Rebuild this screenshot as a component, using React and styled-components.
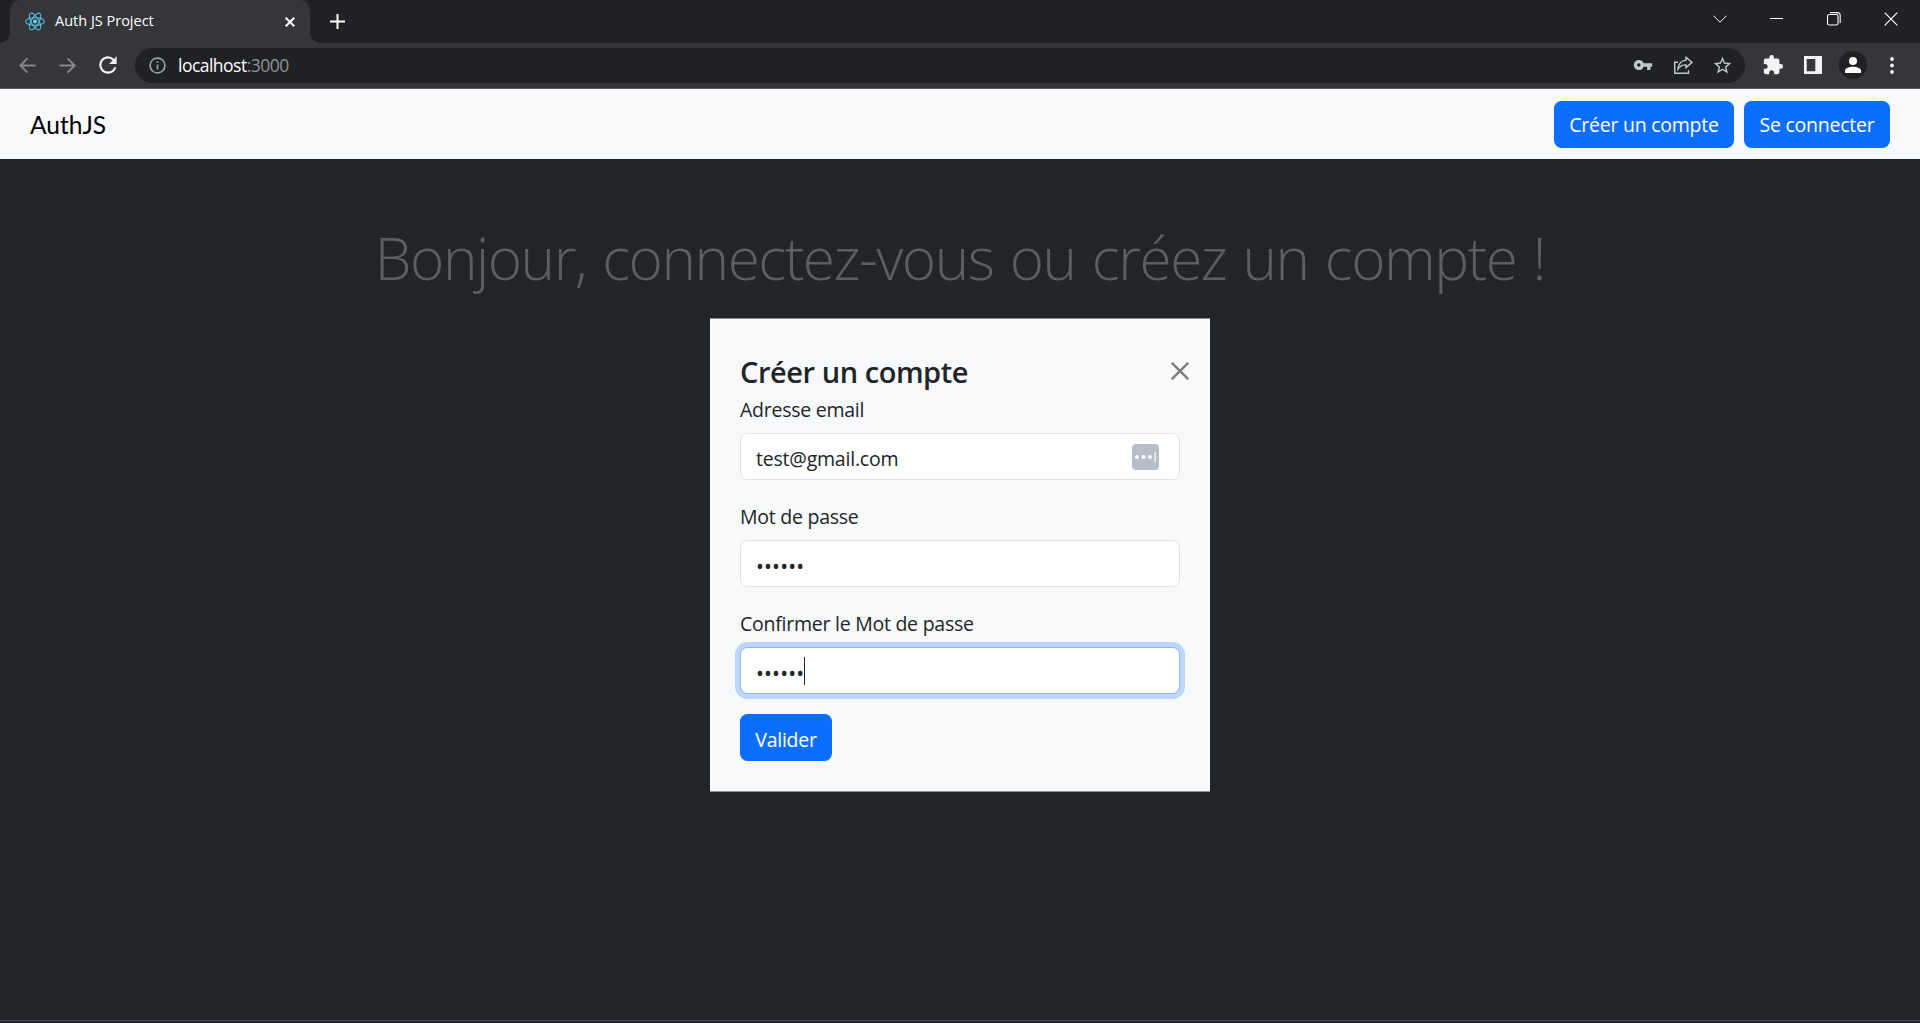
import React from "react";
import styled, { createGlobalStyle, css } from "styled-components";
import { MdVpnKey, MdExtension, MdRefresh, MdStarBorder } from "react-icons/md";

const GlobalStyle = createGlobalStyle`
  *, *::before, *::after { box-sizing: border-box; }
  html, body { margin: 0; padding: 0; background: #212529; }
  body { font-family: "Open Sans", "Noto Sans", sans-serif; overflow: hidden; }
  h1, h2, p { margin: 0; }
`;

const Window = styled.div`
  display: flex;
  flex-direction: column;
  width: 1920px;
  height: 1023px;
  overflow: hidden;
  background: #212529;
`;

const TabStrip = styled.div`
  display: flex;
  flex: none;
  height: 43px;
  padding-left: 10px;
  background: #202124;
`;

const Tab = styled.div`
  position: relative;
  display: flex;
  align-items: center;
  width: 300px;
  height: 43px;
  padding: 0 15px;
  border-radius: 10px 10px 0 0;
  background: #35363a;
  color: #fff;

  &::before, &::after {
    content: "";
    position: absolute;
    bottom: 0;
    width: 10px;
    height: 10px;
  }
  &::before {
    left: -10px;
    background: radial-gradient(circle at 0 0, transparent 9.5px, #35363a 10px);
  }
  &::after {
    right: -10px;
    background: radial-gradient(circle at 100% 0, transparent 9.5px, #35363a 10px);
  }
`;

const Icon = styled.svg`
  display: block;
  flex: none;
`;

const TabTitle = styled.span`
  flex: 1;
  margin-left: 10px;
  padding-bottom: 1px;
  font-size: 14.5px;
  line-height: 20px;
  white-space: nowrap;
`;

const NewTab = styled.div`
  display: flex;
  align-items: center;
  margin-left: 20px;
`;

const WindowControls = styled.div`
  display: flex;
  align-items: center;
  gap: 43.5px;
  height: 37px;
  margin-left: auto;
  padding-right: 22px;
`;

const Toolbar = styled.div`
  display: flex;
  align-items: center;
  flex: none;
  height: 46px;
  padding: 0 19px;
  padding-bottom: 1px;
  border-bottom: 1px solid #5b5c60;
  background: #35363a;
  color: #f1f3f4;
`;

const NavButtons = styled.div`
  display: flex;
  align-items: center;
  gap: 23px;
  width: 116px;

  svg:last-child { margin-left: -4px; }
`;

const AddressBar = styled.div`
  display: flex;
  align-items: center;
  width: 1610px;
  height: 35px;
  padding: 0 12px 0 14px;
  border-radius: 18px;
  background: #202124;
  color: #c4c7ca;
`;

const Url = styled.span`
  margin-left: 12px;
  color: #fff;
  font-size: 17.5px;
  line-height: 24px;
  letter-spacing: -0.52px;
`;

const Port = styled.span`
  color: #8f9397;
`;

const AddressActions = styled.div`
  display: flex;
  align-items: center;
  gap: 19.5px;
  margin-left: auto;
`;

const Extensions = styled.div`
  display: flex;
  align-items: center;
  margin-left: 17px;
`;

const SidePanelIcon = styled(Icon)`
  margin-left: 20px;
`;

const Avatar = styled.div`
  display: flex;
  align-items: center;
  justify-content: center;
  width: 28px;
  height: 28px;
  margin: 0 23px 0 17px;
  border-radius: 50%;
  background: #202124;
`;

const Navbar = styled.nav`
  display: flex;
  align-items: center;
  flex: none;
  height: 70px;
  padding: 0 30px;
  background: #f8f9fa;
`;

const Brand = styled.span`
  margin-right: auto;
  padding-top: 2px;
  color: #000;
  font-family: Lato, "Open Sans", sans-serif;
  font-size: 24.5px;
  line-height: 36px;
  white-space: nowrap;
`;

const NavActions = styled.div`
  display: flex;
  gap: 10px;
`;

const bodyText = css`
  font-size: 19.5px;
  line-height: 30px;
  letter-spacing: -0.25px;
  white-space: nowrap;
`;

const Button = styled.button`
  ${bodyText}
  display: flex;
  align-items: center;
  justify-content: center;
  width: ${(p) => p.$width}px;
  height: 47px;
  padding: ${(p) => p.$drop || 0}px 0 0;
  border: 0;
  border-radius: 7.5px;
  background: #0d6efd;
  color: #fff;
  font-family: inherit;
`;

const Main = styled.main`
  display: flex;
  flex: 1;
  flex-direction: column;
  align-items: center;
  padding-top: 60px;
`;

const Heading = styled.h1`
  height: 99.4px;
  color: #5c5f62;
  font-size: 58.5px;
  font-weight: 300;
  line-height: 76px;
  letter-spacing: -1.45px;
  word-spacing: 2.4px;
  white-space: nowrap;
`;

const Modal = styled.section`
  width: 500px;
  height: 474px;
  padding: 35px 30px 30px;
  background: #f8f9fa;
  box-shadow: inset 0 1px #8c8f92, inset 0 -1px #8c8f92;
  color: #212529;
`;

const ModalHeader = styled.header`
  display: flex;
  align-items: flex-start;
  justify-content: space-between;
  height: 40px;
  margin-right: -9px;
`;

const Title = styled.h2`
  padding-top: 1px;
  font-size: 29px;
  font-weight: 600;
  line-height: 36px;
  letter-spacing: -0.45px;
  white-space: nowrap;
`;

const CloseButton = styled.div`
  padding-top: 9px;
`;

const Field = styled.div`
  margin-bottom: 20px;
`;

const Label = styled.label`
  ${bodyText}
  display: block;
  width: max-content;
  padding-top: 2px;
  margin-bottom: 8px;
`;

const InputBox = styled.div`
  ${bodyText}
  display: flex;
  align-items: center;
  height: 47px;
  padding: 0 20.5px 0 15px;
  border: 1px solid ${(p) => (p.$focus ? "#86b7fe" : "#dee2e6")};
  border-radius: 7.5px;
  background: #fff;
  box-shadow: ${(p) => (p.$focus ? "0 0 0 5px rgba(13, 110, 253, 0.25)" : "none")};
`;

const Value = styled.span`
  padding-top: 4px;
  letter-spacing: -0.2px;
`;

const PasswordIcon = styled(Icon)`
  margin-left: auto;
`;

const Dots = styled.span`
  padding-top: 4px;
  font-size: 21px;
  letter-spacing: 0.15px;
`;

const Caret = styled.span`
  width: 1px;
  height: 28px;
  margin-left: -0.5px;
  background: #212529;
`;

const BottomEdge = styled.div`
  flex: none;
  height: 3px;
  border-top: 1px solid #45484c;
  background: #1d2433;
`;

function ReactLogo() {
  return (
    <Icon width="20" height="21" viewBox="-10 -10.5 20 21" fill="none" stroke="#53c1de" strokeWidth="1.1">
      <ellipse rx="9.4" ry="3.8" />
      <ellipse rx="9.4" ry="3.8" transform="rotate(60)" />
      <ellipse rx="9.4" ry="3.8" transform="rotate(120)" />
      <circle r="1.9" fill="#61dafb" stroke="none" />
    </Icon>
  );
}

function Cross({ size, color, width }) {
  return (
    <Icon width={size} height={size} viewBox={`0 0 ${size} ${size}`} stroke={color} strokeWidth={width}>
      <path d={`M.7.7 ${size - 0.7} ${size - 0.7}M${size - 0.7}.7.7 ${size - 0.7}`} />
    </Icon>
  );
}

function Arrow({ flip }) {
  return (
    <Icon width="17" height="17" viewBox="0 0 17 17" fill="none" stroke="#86888b" strokeWidth="1.8">
      <path d={flip ? "M0.5 8.5H15.5M8.5 1.3l7.2 7.2-7.2 7.2" : "M16.5 8.5H1.5M8.5 1.3L1.3 8.5l7.2 7.2"} />
    </Icon>
  );
}

export default function App() {
  return (
    <Window>
      <GlobalStyle />
      <TabStrip>
        <Tab>
          <ReactLogo />
          <TabTitle>Auth JS Project</TabTitle>
          <Cross size={10} color="#fff" width={2} />
        </Tab>
        <NewTab>
          <Icon width="15" height="15" viewBox="0 0 15 15" stroke="#fff" strokeWidth="2">
            <path d="M7.5 0v15M0 7.5h15" />
          </Icon>
        </NewTab>
        <WindowControls>
          <Icon width="14" height="8" viewBox="0 0 14 8" fill="none" stroke="#fff">
            <path d="M.5.7 7 7.2 13.5.7" />
          </Icon>
          <Icon width="13" height="1" viewBox="0 0 13 1" fill="#fff">
            <path d="M0 0h13v1H0z" />
          </Icon>
          <Icon width="14" height="14" viewBox="0 0 14 14" fill="none" stroke="#fff" strokeWidth="1.1">
            <rect x=".5" y="2.5" width="10.5" height="10.5" rx="1.8" />
            <path d="M3 .6h7.3a2.8 2.8 0 0 1 2.9 2.9V11" />
          </Icon>
          <Cross size={14} color="#fff" width={1.2} />
        </WindowControls>
      </TabStrip>
      <Toolbar>
        <NavButtons>
          <Arrow />
          <Arrow flip />
          <MdRefresh size={26} />
        </NavButtons>
        <AddressBar>
          <Icon width="17" height="17" viewBox="0 0 17 17" fill="none" stroke="#9aa0a6" strokeWidth="1.7">
            <circle cx="8.5" cy="8.5" r="7.4" />
            <path d="M8.5 7.4v5M8.5 4.2v1.9" />
          </Icon>
          <Url>localhost<Port>:3000</Port></Url>
          <AddressActions>
            <MdVpnKey size={20} />
            <Icon width="20" height="20" viewBox="0 0 20 20" fill="none" stroke="currentColor" strokeWidth="1.4">
              <path d="M5 7.2H1.7V18.3h13.8v-3" />
              <path d="M13 2.200 19 7.400 13 12.600V9.900C9.600 9.800 7 11 4.900 14 5.400 8.900 8.400 5.700 13 5.100Z" />
            </Icon>
            <MdStarBorder size={21} />
          </AddressActions>
        </AddressBar>
        <Extensions>
          <MdExtension size={22} />
          <SidePanelIcon width="18" height="18" viewBox="0 0 18 18" fill="#f1f3f4" fillRule="evenodd">
            <path d="M0 0h18v18H0zM2.700 3v12.300h8.600V3z" />
          </SidePanelIcon>
          <Avatar>
            <Icon width="16" height="16" viewBox="0 0 16 16" fill="#fff">
              <circle cx="8" cy="4" r="4" />
              <path d="M0 16v-2.200C0 11.200 4.500 9.800 8 9.800s8 1.400 8 4V16z" />
            </Icon>
          </Avatar>
          <Icon width="4" height="17" viewBox="0 0 4 17" fill="#f1f3f4">
            <circle cx="2" cy="2" r="1.900" />
            <circle cx="2" cy="8.500" r="1.900" />
            <circle cx="2" cy="15" r="1.900" />
          </Icon>
        </Extensions>
      </Toolbar>
      <Navbar>
        <Brand>AuthJS</Brand>
        <NavActions>
          <Button $width={180} $drop={2}>Créer un compte</Button>
          <Button $width={146} $drop={2}>Se connecter</Button>
        </NavActions>
      </Navbar>
      <Main>
        <Heading>Bonjour, connectez-vous ou créez un compte !</Heading>
        <Modal>
          <ModalHeader>
            <Title>Créer un compte</Title>
            <CloseButton><Cross size={18} color="#7c7d7d" width={2.4} /></CloseButton>
          </ModalHeader>
          <Field>
            <Label>Adresse email</Label>
            <InputBox>
              <Value>test@gmail.com</Value>
              <PasswordIcon width="27" height="26" viewBox="0 0 27 26" fill="#fff">
                <rect width="27" height="26" rx="4" fill="#b8bec9" />
                <circle cx="5" cy="13" r="2" />
                <circle cx="11.500" cy="13" r="2" />
                <circle cx="18" cy="13" r="2" />
                <path d="M22.500 8h1.200v10h-1.200z" />
              </PasswordIcon>
            </InputBox>
          </Field>
          <Field>
            <Label>Mot de passe</Label>
            <InputBox><Dots>••••••</Dots></InputBox>
          </Field>
          <Field>
            <Label>Confirmer le Mot de passe</Label>
            <InputBox $focus><Dots>••••••</Dots><Caret /></InputBox>
          </Field>
          <Button $width={92} $drop={4}>Valider</Button>
        </Modal>
      </Main>
      <BottomEdge />
    </Window>
  );
}
